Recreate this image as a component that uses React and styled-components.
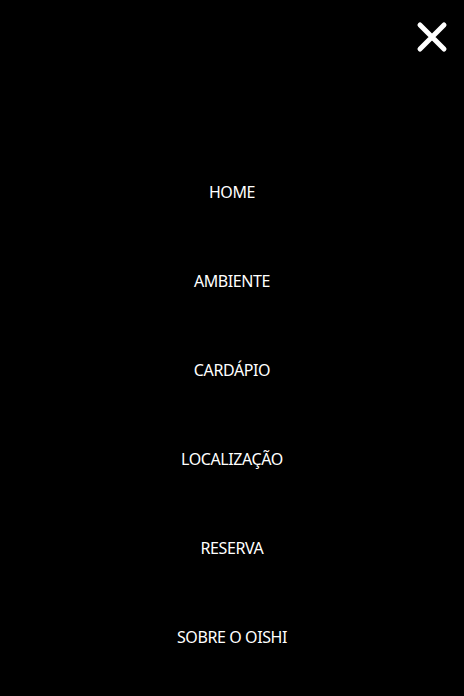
import styled, { createGlobalStyle } from 'styled-components'

const GlobalStyle = createGlobalStyle`
    html, body {
        margin: 0;
        padding: 0;
        background: #000;
    }
    body {
        font-family: "Noto Sans", "Open Sans", sans-serif;
    }
`

const Root = styled.nav`
    width: 464px;
    height: 696px;
    background-color: #000;
    color: #fff;
    display: flex;
    flex-direction: column;
    overflow: hidden;
`
const Top = styled.div`
    display: flex;
    justify-content: flex-end;
    padding: 20px 15px 0 0;
`
const Close = styled.button`
    width: 34px;
    height: 34px;
    padding: 0;
    border: none;
    background: none;
    cursor: pointer;
    display: flex;
    align-items: center;
    justify-content: center;
`
const Items = styled.ul`
    list-style: none;
    margin: 0;
    padding: 93px 0 0 0;
    display: flex;
    flex-direction: column;
`
const Item = styled.li`
    height: 89px;
    display: flex;
    align-items: center;
    justify-content: center;
    font-size: 16px;
    letter-spacing: -0.4px;
    cursor: pointer;
`

const items = ['HOME', 'AMBIENTE', 'CARDÁPIO', 'LOCALIZAÇÃO', 'RESERVA', 'SOBRE O OISHI']

export default function App() {
    return (
        <Root>
            <GlobalStyle />
            <Top>
                <Close aria-label="Fechar">
                    <svg width="34" height="34" viewBox="0 0 34 34">
                        <path d="M5 5 L29 29 M29 5 L5 29" stroke="#fff" strokeWidth="5" strokeLinecap="round" />
                    </svg>
                </Close>
            </Top>
            <Items>
                {items.map(label => <Item key={label}>{label}</Item>)}
            </Items>
        </Root>
    )
}
